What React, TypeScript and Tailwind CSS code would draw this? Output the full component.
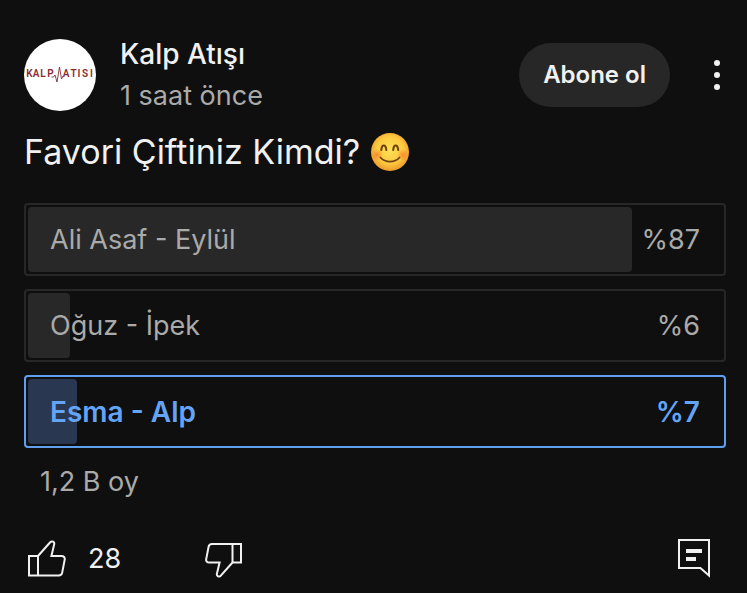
type Option = {
  label: string;
  percent: number;
  selected?: boolean;
};

const options: Option[] = [
  { label: 'Ali Asaf - Eylül', percent: 87 },
  { label: 'Oğuz - İpek', percent: 6 },
  { label: 'Esma - Alp', percent: 7, selected: true },
];

function Avatar() {
  return (
    <a
      href="#kanal"
      aria-label="Kalp Atışı kanalı"
      className="h-[72px] w-[72px] shrink-0 overflow-hidden rounded-full bg-white"
    >
      <svg viewBox="0 0 72 72" className="h-full w-full" aria-hidden="true">
        <g
          fill="#8c2a30"
          fontFamily="Roboto, sans-serif"
          fontSize="10"
          fontWeight="600"
          textAnchor="middle"
        >
          <text x="5.500" y="38">K</text>
          <text x="12" y="38">A</text>
          <text x="19" y="38">L</text>
          <text x="26.500" y="38">P</text>
          <text x="42" y="38">A</text>
          <text x="49.500" y="38">T</text>
          <text x="55" y="38">I</text>
          <text x="61" y="38">S</text>
          <text x="67.500" y="38">I</text>
        </g>
        <path
          d="M27.500 38h2l1.500-2 2 7 2.500-15 2 12 1.500-3"
          fill="none"
          stroke="#7d3038"
          strokeWidth="0.9"
        />
      </svg>
    </a>
  );
}

function SmileEmoji() {
  return (
    <svg viewBox="0 0 40 40" className="h-10 w-10" role="img" aria-label="Gülümseyen yüz">
      <defs>
        <radialGradient id="face" cx="0.5" cy="0.45" r="0.55">
          <stop offset="0" stopColor="#ffe055" />
          <stop offset="0.65" stopColor="#fdc93f" />
          <stop offset="1" stopColor="#eb9a2b" />
        </radialGradient>
        <radialGradient id="cheek">
          <stop offset="0" stopColor="#f7762f" stopOpacity="0.75" />
          <stop offset="1" stopColor="#f7762f" stopOpacity="0" />
        </radialGradient>
      </defs>
      <circle cx="20" cy="20" r="19" fill="url(#face)" />
      <circle cx="7" cy="23" r="6" fill="url(#cheek)" />
      <circle cx="33" cy="23" r="6" fill="url(#cheek)" />
      <g fill="none" stroke="#6f4310" strokeLinecap="round">
        <path d="M11.300 18c.6-6 4.400-6 5 0M23.200 18c.6-6 4.400-6 5 0" strokeWidth="2.100" />
        <path d="M10.500 25.500c4.800 5.500 14.200 5.500 19 0" strokeWidth="1.800" />
      </g>
    </svg>
  );
}

function LikeIcon() {
  return (
    <svg
      viewBox="0 0 38 38"
      className="h-[38px] w-[38px]"
      fill="none"
      stroke="currentColor"
      strokeWidth="2"
      aria-hidden="true"
    >
      <path d="M1 16h9v19.500H1zM10 16L22.200 2.300c1.700-1.800 4.600-.4 4 2L23.400 16h10c2.400 0 3.700 1.400 3.300 3.600l-2.500 13c-.4 2-1.400 2.900-3.400 2.900H10" />
    </svg>
  );
}

function DislikeIcon() {
  return (
    <svg
      viewBox="0 0 38 38"
      className="h-[38px] w-[38px]"
      fill="none"
      stroke="currentColor"
      strokeWidth="2"
      aria-hidden="true"
    >
      <path d="M36 4h-8.500v18.500H36zM27.500 22.500L15.800 35.700c-1.600 1.800-4.400.4-3.900-1.900l2.700-11.300H4.300c-2.300 0-3.500-1.300-3.100-3.400L3.600 6.700C4 4.800 5 4 6.800 4h20.700" />
    </svg>
  );
}

function CommentIcon() {
  return (
    <svg viewBox="0 0 34 40" className="h-10 w-[34px]" aria-hidden="true">
      <path d="M2 1h30v35.500L23.400 29H2z" fill="none" stroke="currentColor" strokeWidth="2" />
      <path d="M9 10h16v4H9zM9 18h10v4H9z" fill="currentColor" />
    </svg>
  );
}

function PollOption({ label, percent, selected }: Option) {
  return (
    <button
      type="button"
      aria-pressed={!!selected}
      className={`relative block h-[73px] w-full rounded border-2 p-0.5 leading-8 ${
        selected
          ? 'border-[#5f9ff0] text-[28px] font-semibold text-[#63a4f8]'
          : 'border-[#272727] text-[27px] text-[#aaaaaa]'
      }`}
    >
      <span
        className={`block h-full rounded ${selected ? 'bg-[#2a3750]' : 'bg-[#282828]'}`}
        style={{ width: `${percent}%` }}
      />
      <span className="absolute inset-0 flex items-center justify-between px-6">
        <span>{label}</span>
        <span>%{percent}</span>
      </span>
    </button>
  );
}

export default function App() {
  return (
    <main className="min-h-screen bg-[#0f0f0f] font-['Inter',sans-serif] text-[#f1f1f1]">
      <article className="pt-9 pr-[21px] pl-6">
        <header className="flex items-center">
          <Avatar />
          <div className="ml-6 min-w-0 flex-1 pt-0.5">
            <h1 className="text-[28px] font-medium leading-8">Kalp Atışı</h1>
            <p className="mt-2 text-[27px] leading-9 text-[#aaaaaa]">1 saat önce</p>
          </div>
          <button
            type="button"
            className="h-16 rounded-full bg-[#272727] px-6 text-2xl font-semibold"
          >
            Abone ol
          </button>
          <button
            type="button"
            aria-label="Diğer işlemler"
            className="ml-11 flex h-12 w-3 flex-col items-start justify-center gap-1.5"
          >
            <span className="h-1.5 w-1.5 rounded-full bg-current" />
            <span className="h-1.5 w-1.5 rounded-full bg-current" />
            <span className="h-1.5 w-1.5 rounded-full bg-current" />
          </button>
        </header>

        <p className="mt-[18px] flex items-center gap-2.5 text-[34px] leading-10">
          Favori Çiftiniz Kimdi?
          <SmileEmoji />
        </p>

        <div className="mt-[31px] flex flex-col gap-[13px]">
          {options.map((option) => (
            <PollOption key={option.label} {...option} />
          ))}
        </div>

        <p className="mt-4 ml-4 text-[27px] leading-9 text-[#aaaaaa]">1,2 B oy</p>

        <footer className="mt-[39px] flex items-center">
          <button type="button" aria-label="Beğen" className="ml-1 flex items-center gap-[22px] text-[27px] leading-8">
            <LikeIcon />
            28
          </button>
          <button type="button" aria-label="Beğenme" className="ml-[84px]">
            <DislikeIcon />
          </button>
          <button type="button" aria-label="Yorumlar" className="mr-[15px] ml-auto">
            <CommentIcon />
          </button>
        </footer>
      </article>
    </main>
  );
}
